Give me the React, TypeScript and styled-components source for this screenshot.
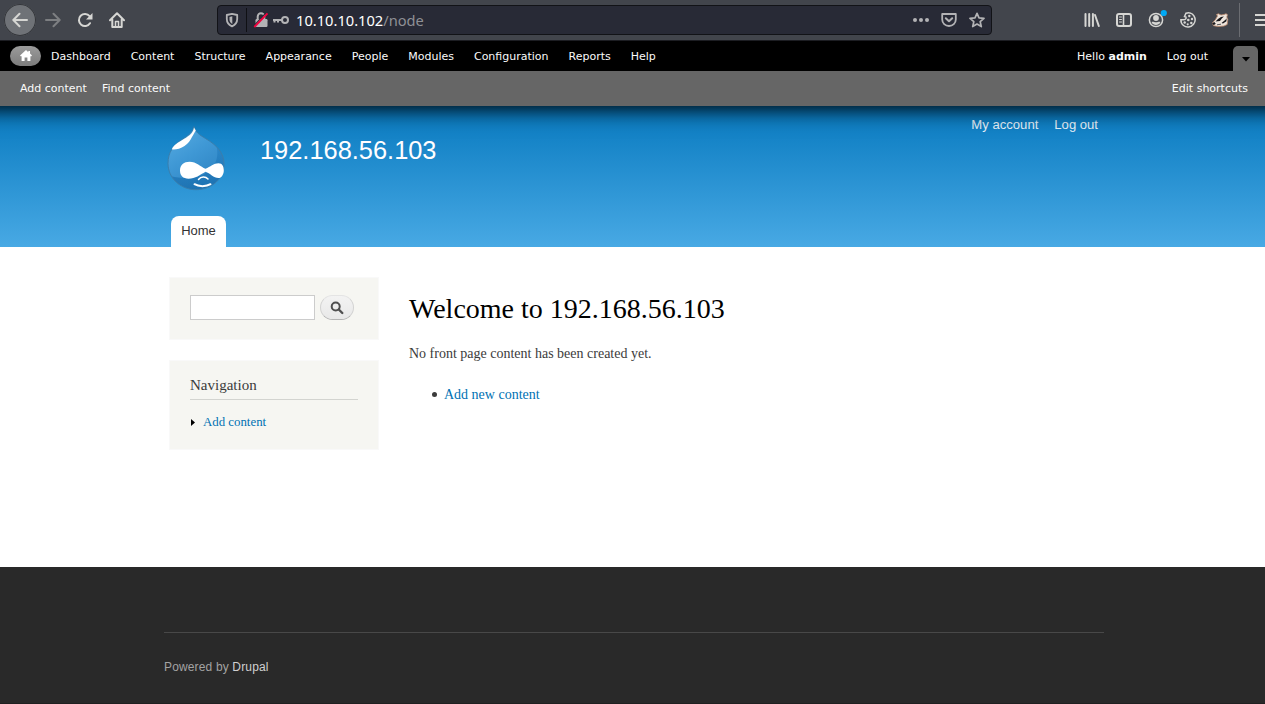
import React from "react";
import styled, { createGlobalStyle } from "styled-components";

const Global = createGlobalStyle`
  * { box-sizing: border-box; }
  body { margin: 0; background: #fff; overflow: hidden; }
  a { text-decoration: none; color: inherit; }
`;

const sans = `"Liberation Sans", Arial, sans-serif`;
const serif = `"Liberation Serif", Georgia, serif`;
const ui = `"DejaVu Sans", Verdana, sans-serif`;

const Window = styled.div`
  width: 1265px;
  height: 704px;
  overflow: hidden;
  display: flex;
  flex-direction: column;
`;

/* Browser chrome */
const Chrome = styled.div`
  position: relative;
  z-index: 3;
  flex: none;
  height: 41px;
  display: flex;
  align-items: center;
  overflow: hidden;
  background: #42454c;
  border-bottom: 1px solid #1c1d22;
  color: #d6d6d3;
`;
const BackButton = styled.div`
  flex: none;
  width: 32px;
  height: 32px;
  margin-left: 4px;
  border-radius: 50%;
  background: #6f7277;
  box-shadow: inset 0 0 0 1px #34363b;
  display: flex;
  align-items: center;
  justify-content: center;
`;
const NavIcons = styled.div`
  flex: none;
  display: flex;
  gap: 16px;
  margin-left: 9px;
  svg { display: block; }
`;
const UrlBar = styled.div`
  flex: none;
  width: 775px;
  height: 30px;
  margin-left: 92px;
  border: 1px solid #121317;
  border-radius: 4px;
  background: #282a36;
  display: flex;
  align-items: center;
  color: #b3b3b5;
  svg { display: block; }
`;
const Shield = styled.div`
  width: 29px;
  height: 24px;
  padding-left: 6px;
  border-right: 1px solid #0f1014;
  display: flex;
  align-items: center;
`;
const Security = styled.div`
  display: flex;
  align-items: center;
  gap: 4px;
  margin-left: 6px;
`;
const Url = styled.div`
  flex: 1;
  margin-left: 7px;
  font: 14.67px/20px "Noto Sans", sans-serif;
  color: #8f9095;
  b { font-weight: 400; color: #fff; }
`;
const UrlActions = styled.div`
  display: flex;
  gap: 12px;
  margin-right: 6px;
`;
const Extensions = styled.div`
  flex: none;
  display: flex;
  gap: 16px;
  margin-left: 92px;
  svg { display: block; overflow: visible; }
`;
const MenuArea = styled.div`
  flex: none;
  height: 34px;
  margin-left: 11px;
  padding-left: 14px;
  border-left: 1px solid #6b6d72;
  display: flex;
  align-items: center;
`;

/* Admin toolbar */
const Toolbar = styled.div`
  position: relative;
  z-index: 2;
  flex: none;
  margin: 0 -30px;
  padding: 0 30px;
  background: #666;
  box-shadow: 0 3px 20px #000;
  font: 11px/20px ${ui};
  color: #fafafa;
`;
const ToolbarRow = styled.div`
  height: 30px;
  padding: 5px 7px 0 10px;
  background: #000;
  display: flex;
`;
const HomePill = styled.a`
  width: 31px;
  height: 20px;
  margin-right: 10px;
  padding-bottom: 1px;
  border-radius: 10px;
  background: linear-gradient(#9b9b9b, #7c7c7c);
  display: flex;
  align-items: center;
  justify-content: center;
`;
const MenuList = styled.nav`
  display: flex;
  gap: 20px;
  line-height: 22px;
`;
const UserMenu = styled(MenuList)`
  margin-left: auto;
`;
const Toggle = styled.div`
  width: 25px;
  height: 25px;
  margin-left: 25px;
  padding-top: 2px;
  border-radius: 5px 5px 0 0;
  background: #666;
  display: flex;
  align-items: center;
  justify-content: center;
`;
const Drawer = styled.div`
  height: 35px;
  padding: 8px 17px 0 20px;
  display: flex;
  gap: 15px;
`;
const EditLink = styled.a`
  margin-left: auto;
`;

/* Site header */
const Header = styled.header`
  flex: none;
  height: 141px;
  padding: 0 167px;
  background: linear-gradient(#0779bf, #48a9e4);
  display: flex;
  flex-direction: column;
  font-family: ${sans};
`;
const Branding = styled.div`
  display: flex;
  height: 110px;
`;
const Logo = styled.svg`
  display: block;
  margin: 20px 1px 0 -1px;
`;
const SiteName = styled.div`
  margin: 28px 0 0 33px;
  font-size: 25.4px;
  line-height: 33px;
  color: #fffeff;
`;
const AccountMenu = styled.div`
  margin-left: auto;
  margin-top: 11px;
  display: flex;
  gap: 16px;
  font-size: 13.1px;
  line-height: 16px;
  color: #e6f1f9;
`;
const HomeTab = styled.a`
  width: 55px;
  height: 31px;
  margin-left: 4px;
  border-radius: 8px 8px 0 0;
  background: #fff;
  font-size: 13px;
  line-height: 30px;
  text-align: center;
  color: #333;
`;

/* Page body */
const Main = styled.main`
  flex: none;
  height: 320px;
  padding: 30px 0 0 169px;
  display: flex;
  gap: 30px;
  font-family: ${serif};
  color: #3b3b3b;
`;
const Sidebar = styled.aside`
  width: 210px;
  display: flex;
  flex-direction: column;
  gap: 20px;
`;
const Block = styled.section<{ $height: number }>`
  height: ${(p) => p.$height}px;
  padding: 0 20px;
  background: #f6f6f2;
  border: 1px solid #f9f9f9;
`;
const SearchForm = styled.div`
  display: flex;
  gap: 5px;
  margin-top: 17px;
`;
const SearchInput = styled.input`
  width: 125px;
  height: 25px;
  border: 1px solid #ccc;
  background: #fff;
`;
const SearchButton = styled.button`
  width: 34px;
  height: 25px;
  padding: 0;
  border: 1px solid #e4e4e4;
  border-bottom-color: #b4b4b4;
  border-left-color: #d2d2d2;
  border-right-color: #d2d2d2;
  border-radius: 13px;
  background: linear-gradient(#f3f3f3, #e8e8e8);
  display: flex;
  align-items: center;
  justify-content: center;
`;
const BlockTitle = styled.h2`
  margin: 14px 0 0;
  height: 25px;
  border-bottom: 1px solid #d3d4d0;
  font-weight: 400;
  font-size: 15px;
  line-height: 20px;
`;
const TreeItem = styled.a`
  margin-top: 14px;
  display: flex;
  align-items: center;
  gap: 7px;
  font-size: 12.85px;
  line-height: 17px;
  color: #0071b3;
`;
const Content = styled.article`
  font-size: 14px;
  line-height: 22px;
`;
const Title = styled.h1`
  margin: 13px 0 0;
  font-weight: 400;
  font-size: 28px;
  line-height: 37px;
  color: #000;
`;
const Text = styled.p`
  margin: 16px 0 0;
`;
const Bullets = styled.ul`
  margin: 19px 0 0;
  padding-left: 23px;
  list-style: none;
  li { display: flex; align-items: center; gap: 7px; }
  li::before {
    content: "";
    width: 5px;
    height: 5px;
    margin-bottom: 1px;
    border-radius: 50%;
    background: #3b3b3b;
  }
  a { color: #0071b3; }
`;

const Footer = styled.footer`
  flex: 1;
  padding: 65px 161px 0 164px;
  background: #292929;
  border-bottom: 1px solid #202020;
  font: 12px/16px ${sans};
  color: #a3a3a3;
`;
const Credit = styled.div`
  padding-top: 26px;
  border-top: 1px solid #484848;
  letter-spacing: 0.15px;
  a { color: #d0d0d0; }
`;

const stroke = { fill: "none", stroke: "currentColor", strokeWidth: 2, strokeLinecap: "round", strokeLinejoin: "round" } as const;

const Arrow = ({ back = false }: { back?: boolean }) => (
  <svg width="16" height="16" viewBox="0 0 16 16" {...stroke} opacity={back ? 1 : 0.4}>
    {back ? <path d="M15 8H1.500M7.500 1.800 1.300 8l6.200 6.200" /> : <path d="M1 8h13.500M8.500 1.800 14.700 8l-6.200 6.200" />}
  </svg>
);
const Reload = () => (
  <svg width="16" height="16" viewBox="0 0 16 16" {...stroke}>
    <path d="M13 11.2A6 6 0 1 1 12.6 4.2" />
    <path d="M15.500 1v6.500H9z" fill="currentColor" stroke="none" />
  </svg>
);
const HouseOutline = () => (
  <svg width="16" height="16" viewBox="0 0 16 16" {...stroke}>
    <path d="M1 8.200 8 1.300l7 6.900M3.300 7.500V15h9.400V7.500" />
    <path d="M6.500 14.500V9.500h3v5" strokeWidth="1.500" />
  </svg>
);
const ShieldIcon = () => (
  <svg width="16" height="16" viewBox="0 0 16 16" {...stroke}>
    <path d="M8 1.800 13.200 3v4c0 3.800-2.200 6-5.200 7.400C5 13 2.800 10.800 2.800 7V3z" strokeWidth="1.800" />
    <path d="M8.300 4.300v7.700c-2-1.200-2.800-2.700-2.800-4.700V4.900z" fill="currentColor" stroke="none" />
  </svg>
);
const LockOff = () => (
  <svg width="16" height="16" viewBox="0 0 16 16">
    <path d="M4.700 8V4.500a3.300 3.300 0 0 1 6.600 0V8" fill="none" stroke="currentColor" strokeWidth="2" />
    <rect x="2.500" y="7" width="12" height="8" rx="1.200" fill="currentColor" />
    <path d="M1.300 13.400 13 .8" stroke="#282a36" strokeWidth="1.200" />
    <path d="M1.300 15 14.500 1.300" stroke="#f5003f" strokeWidth="1.900" />
  </svg>
);
const Key = () => (
  <svg width="16" height="16" viewBox="0 0 16 16" fill="none" stroke="currentColor" strokeWidth="2">
    <circle cx="12" cy="8" r="3" />
    <path d="M9 8H0M1.500 8v2.500M5 8v2.500" />
  </svg>
);
const Dots = () => (
  <svg width="16" height="16" viewBox="0 0 16 16" fill="currentColor">
    <circle cx="2" cy="8" r="2" /><circle cx="8" cy="8" r="2" /><circle cx="14" cy="8" r="2" />
  </svg>
);
const Pocket = () => (
  <svg width="16" height="16" viewBox="0 0 16 16" {...stroke}>
    <path d="M1.200 2h13.600v5.500a6.800 6.500 0 0 1-13.600 0z" strokeWidth="1.800" />
    <path d="M4.800 6.300 8 9.300l3.200-3" />
  </svg>
);
const Star = () => (
  <svg width="16" height="16" viewBox="0 0 16 16" {...stroke}>
    <path d="m8 1.300 2 4.600 5 .5-3.800 3.300 1.100 4.900L8 12.100l-4.300 2.500 1.100-4.900L1 6.400l5-.5z" strokeWidth="1.700" />
  </svg>
);
const Library = () => (
  <svg width="16" height="16" viewBox="0 0 16 16" {...stroke}>
    <path d="M1.500 2v12M5.200 2v12M8.900 2v12M11 3l3.800 11" />
  </svg>
);
const SidebarIcon = () => (
  <svg width="16" height="16" viewBox="0 0 16 16" {...stroke}>
    <rect x="1" y="2" width="14" height="12" rx="2" />
    <path d="M7.500 2v12" strokeWidth="1.600" />
    <path d="M3.500 5h2M3.500 7.500h2M3.500 10h2" strokeWidth="1" />
  </svg>
);
const Account = () => (
  <svg width="16" height="16" viewBox="0 0 16 16">
    <circle cx="8" cy="8" r="6.600" fill="none" stroke="currentColor" strokeWidth="1.500" />
    <circle cx="8" cy="6" r="2.900" fill="currentColor" />
    <path d="M3.500 10c1.500-.8 2.500.2 4.500.2s3-1 4.500-.2c-.8 2.200-2.600 3-4.500 3S4.300 12.200 3.500 10z" fill="currentColor" />
    <circle cx="15.800" cy="1" r="3.100" fill="#00a9f4" />
  </svg>
);
const Cookie = () => (
  <svg width="16" height="16" viewBox="0 0 16 16">
    <path d="M6 1.200C9 .2 12.500 1 14 4c1.500 2.500 1.300 6-.5 8.300C11 15.500 6.500 16 3.500 13.500 1.500 12 .8 10 .9 7.800h2.300C5.500 7.800 6.500 6.500 6 5L4.500 4.500z" fill="none" stroke="currentColor" strokeWidth="1.500" />
    <g fill="currentColor">
      <circle cx="9.300" cy="4" r="1.200" /><circle cx="12" cy="7" r="1.200" /><circle cx="8.300" cy="8" r="1.300" />
      <circle cx="4.700" cy="10.500" r="1.200" /><circle cx="11.300" cy="11" r="1.200" /><circle cx="7.700" cy="12.300" r="1.100" />
    </g>
  </svg>
);
const Badger = () => (
  <svg width="16" height="16" viewBox="0 0 16 16">
    <path d="M.3 11 3.500 7.500 5.500 4 4.500 2.500l2-.7L9 3l3-.5 2-.8 1.500 1-.7 2.300 1 2.500-.6 5L12 14l-6 .5-4.500-.8z" fill="#ede4dc" stroke="#b98668" strokeWidth=".8" />
    <path d="M3.500 9.500 6 7l3-2 3-.5L10 6.300 8 9l-2.500.3zM9.500 11l4-3.200 1.200-1.500-.3 3L11 11.500z" fill="#17171a" />
    <path d="M.6 11.200 2.500 10.500l.8 1.500-2 .6zM5 12.800l4-.6" fill="#17171a" stroke="#17171a" strokeWidth=".7" />
  </svg>
);
const Burger = () => (
  <svg width="16" height="16" viewBox="0 0 16 16" {...stroke} strokeLinecap="butt">
    <path d="M1 3h14M1 8h14M1 13h14" />
  </svg>
);

const dropOutline = "M28 .5C29.200 6 33 8.500 39.500 12.500 50.500 19 58 26.500 58 38 58 53 45.500 63.700 30 63.700S2 52 2 37.500C2 26 7.500 19 16 13.500 23 9 26.700 6.200 28 .5z";

const DropLogo = () => (
  <Logo width="60" height="66" viewBox="0 0 60 66">
    <defs>
      <linearGradient id="drop" x1="0" y1="0" x2="0.600" y2="1">
        <stop offset="0" stopColor="#5aaee3" />
        <stop offset=".5" stopColor="#3f98d5" />
        <stop offset="1" stopColor="#2d83c2" />
      </linearGradient>
      <linearGradient id="shade" x1="0" y1="0" x2="0" y2="1">
        <stop offset="0" stopColor="#2581c4" />
        <stop offset="1" stopColor="#1468a8" />
      </linearGradient>
      <clipPath id="body"><path d={dropOutline} /></clipPath>
    </defs>
    <path d={dropOutline} fill="url(#drop)" />
    <g clipPath="url(#body)">
      <path d="M50 18c4 14-1 25-14 31-10 4-24 4-36 0 3 12 15 16 28 16 19 0 32-11 32-27 0-9-3-16-10-20z" fill="url(#shade)" opacity=".65" />
    </g>
    <path d={dropOutline} fill="none" stroke="#3a7eac" strokeWidth="1" />
    <path d="M28 1.500C27 8 22 10.500 15.500 14.500 10 17.500 6.500 20.500 5.800 23.300c2.500.8 8.500-.4 12.700-3.300C24 16.500 26 10.500 29.800 4.500z" fill="#fff" />
    <path d="M14 44.500C14 38.800 18 35.700 23.500 35.700c7 0 11 5 16 7 5-2 8-5.500 13-5.500 4 0 5.300 3.500 5.300 7.200S55.500 52 52.500 52c-5 0-8.500-5-13-6.300-5.500 3-10 7-17 7-5.500 0-8.500-3.200-8.500-8.200z" fill="#fff" />
    <path d="M32.500 53.500c2.500-3.300 7-3.300 9.500-.5" fill="none" stroke="#fff" strokeWidth="1.500" strokeLinecap="round" />
    <path d="M28.500 58.200c4 2.600 12 2.600 16 0" fill="none" stroke="#fff" strokeWidth="2" strokeLinecap="round" />
  </Logo>
);

const menu = ["Dashboard", "Content", "Structure", "Appearance", "People", "Modules", "Configuration", "Reports", "Help"];

export default function App() {
  return (
    <Window>
      <Global />
      <Chrome>
        <BackButton><Arrow back /></BackButton>
        <NavIcons><Arrow /><Reload /><HouseOutline /></NavIcons>
        <UrlBar>
          <Shield><ShieldIcon /></Shield>
          <Security><LockOff /><Key /></Security>
          <Url><b>10.10.10.102</b>/node</Url>
          <UrlActions><Dots /><Pocket /><Star /></UrlActions>
        </UrlBar>
        <Extensions><Library /><SidebarIcon /><Account /><Cookie /><Badger /></Extensions>
        <MenuArea><Burger /></MenuArea>
      </Chrome>
      <Toolbar>
        <ToolbarRow>
          <HomePill>
            <svg width="12" height="11" viewBox="0 0 12 11" fill="#fff"><path d="M6 0 0 5.500l1 1 .6-.5V11h3V7.500h2.800V11h3V6l.6.500 1-1-2-1.900V1H8.300v1.200z" /></svg>
          </HomePill>
          <MenuList>{menu.map((m) => <a key={m}>{m}</a>)}</MenuList>
          <UserMenu><a>Hello <b>admin</b></a><a>Log out</a></UserMenu>
          <Toggle><svg width="8" height="5" viewBox="0 0 8 5"><path d="M0 0h8L4 4.500z" /></svg></Toggle>
        </ToolbarRow>
        <Drawer>
          <a>Add content</a>
          <a>Find content</a>
          <EditLink>Edit shortcuts</EditLink>
        </Drawer>
      </Toolbar>
      <Header>
        <Branding>
          <DropLogo />
          <SiteName>192.168.56.103</SiteName>
          <AccountMenu><a>My account</a><a>Log out</a></AccountMenu>
        </Branding>
        <HomeTab>Home</HomeTab>
      </Header>
      <Main>
        <Sidebar>
          <Block $height={63}>
            <SearchForm>
              <SearchInput />
              <SearchButton>
                <svg width="14" height="14" viewBox="0 0 14 14" fill="none" stroke="#505050">
                  <circle cx="5.700" cy="5.500" r="4" strokeWidth="2" />
                  <path d="m8.800 8.500 3.500 3.500" strokeWidth="2.400" strokeLinecap="round" />
                </svg>
              </SearchButton>
            </SearchForm>
          </Block>
          <Block $height={90}>
            <BlockTitle>Navigation</BlockTitle>
            <TreeItem>
              <svg width="6" height="7" viewBox="0 0 6 7"><path d="M1 0v7l4-3.500z" /></svg>
              Add content
            </TreeItem>
          </Block>
        </Sidebar>
        <Content>
          <Title>Welcome to 192.168.56.103</Title>
          <Text>No front page content has been created yet.</Text>
          <Bullets><li><a>Add new content</a></li></Bullets>
        </Content>
      </Main>
      <Footer>
        <Credit>Powered by <a>Drupal</a></Credit>
      </Footer>
    </Window>
  );
}
